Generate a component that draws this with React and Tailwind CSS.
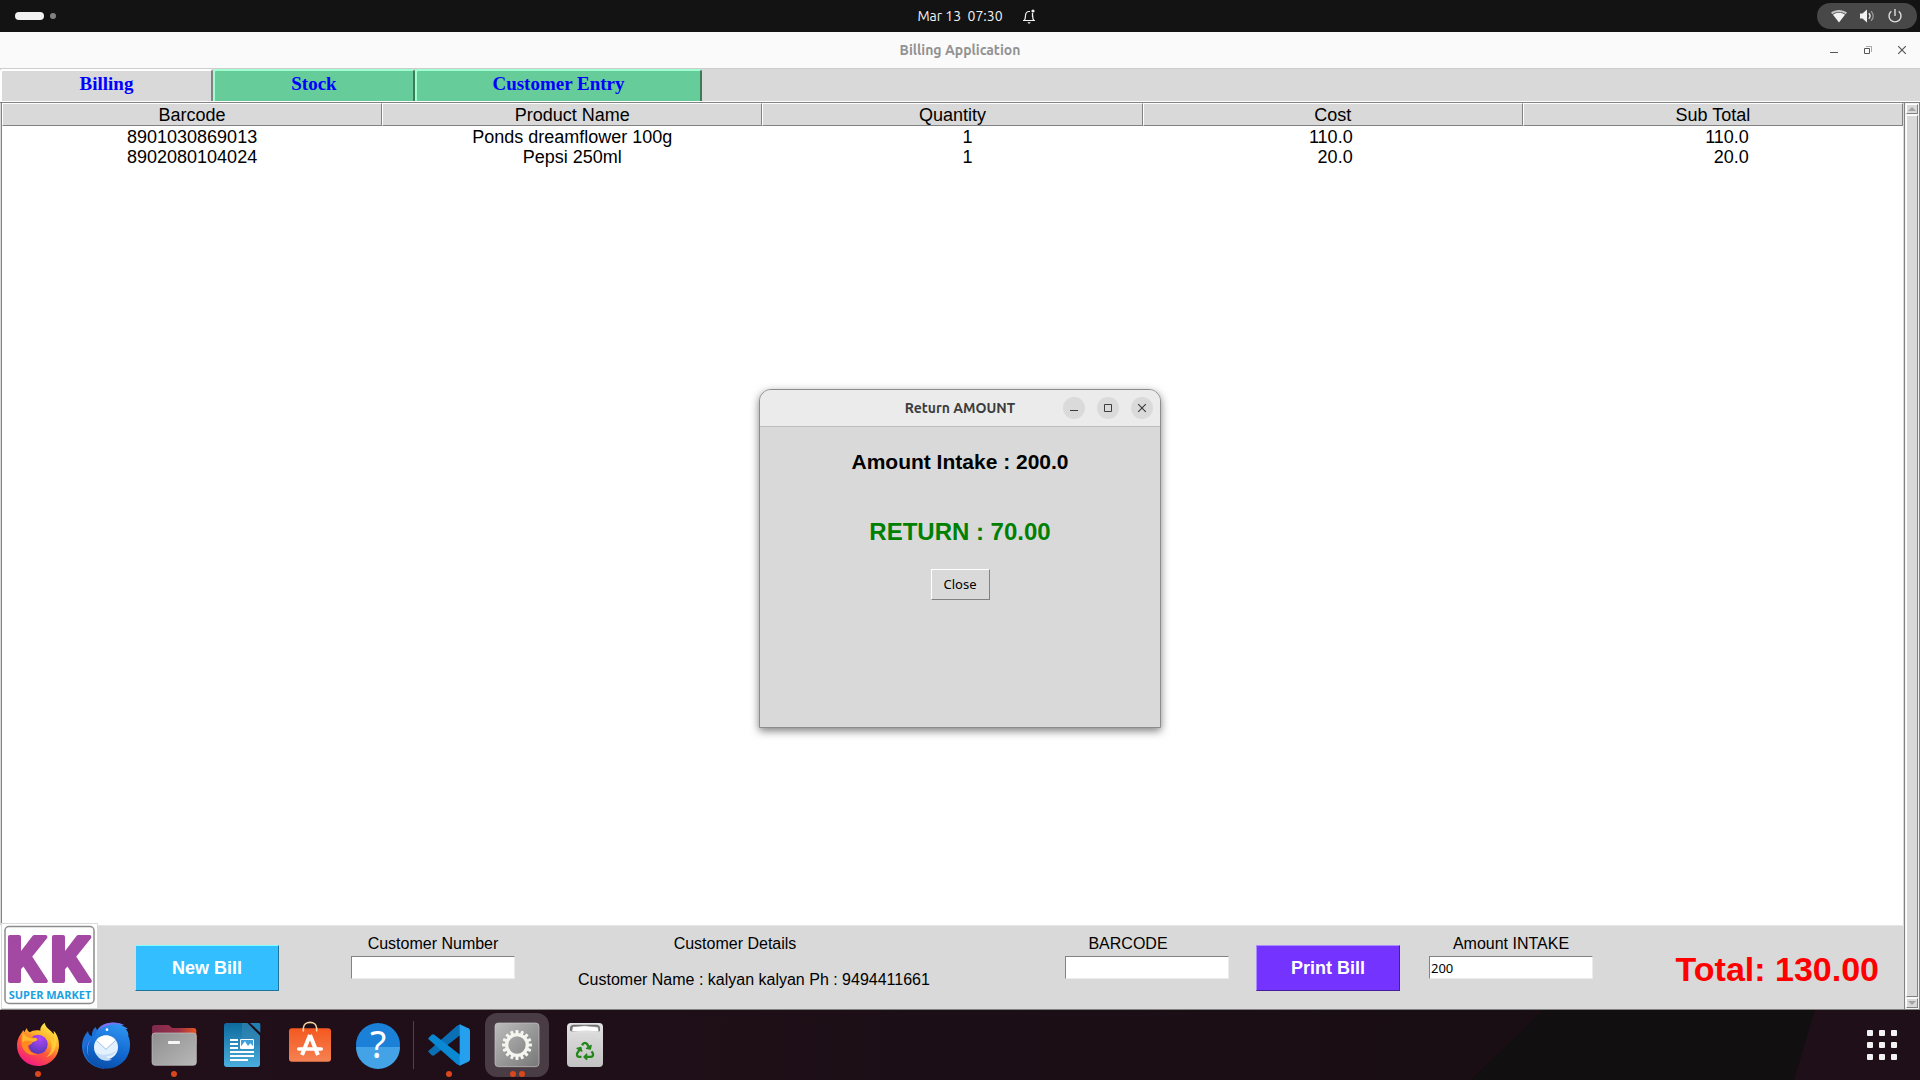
import React from "react";
import { FaRecycle } from "react-icons/fa";

const COLUMNS = ["Barcode", "Product Name", "Quantity", "Cost", "Sub Total"];
const ROWS = [
  ["8901030869013", "Ponds dreamflower 100g", "1", "110.0", "110.0"],
  ["8902080104024", "Pepsi 250ml", "1", "20.0", "20.0"],
];

const LABEL = "text-base leading-5";
const FIELD =
  "h-[23px] w-[164px] border border-t-[#828282] border-l-[#828282] border-r-[#ececec] border-b-[#ececec] bg-white px-px font-['Noto_Sans',sans-serif] text-[13px] text-black outline-none";

function TopBar() {
  return (
    <header className="grid h-8 grid-cols-[1fr_auto_1fr] items-center bg-[#131313] text-[#f2f2f2]">
      <div className="flex items-center gap-1.5 pl-[15px]">
        <span className="h-2 w-[29px] rounded-full bg-[#f2f2f2]" />
        <span className="size-1.5 rounded-full bg-[#808080]" />
      </div>
      <time className="font-['Ubuntu','Noto_Sans',sans-serif] text-sm whitespace-pre">Mar 13  07:30</time>
      <div className="flex items-center justify-between pr-[3px] pl-[18px]">
        <svg viewBox="0 0 16 16" className="size-4" fill="none" stroke="#f2f2f2" strokeWidth="1.2">
          <path d="M3.2 12.5c1.3-1.6 1.1-3 1.3-5 .2-2.600 1.200-4 3.500-4h1M11.500 6.500c.1 2.500.1 4.400 1.300 6M2 12.500h12" />
          <path d="M6.500 14.200h3.200l-.8 1.300H7.300z" fill="#f2f2f2" stroke="none" />
          <circle cx="12" cy="3" r="1.600" fill="#f2f2f2" stroke="none" />
          <path d="M11.500 5v4" />
        </svg>
        <div className="flex h-[26px] w-[100px] items-center justify-center gap-3 rounded-full bg-[#484848]">
          <svg viewBox="0 0 16 16" className="size-4" fill="#f2f2f2">
            <path d="M0 4.600C4.600 1 11.400 1 16 4.600l-1.300 1.600C10.900 3.400 5.100 3.400 1.300 6.200z" opacity=".75" />
            <path d="M2 6.700c3.700-2.600 8.300-2.600 12 0L8 14.500z" />
          </svg>
          <svg viewBox="0 0 16 16" className="size-4" fill="#f2f2f2">
            <path d="M1 5.500h2.500L8 1.500v13l-4.500-4H1z" />
            <path d="M9.800 5.200c1.500 1.600 1.500 4 0 5.600" fill="none" stroke="#f2f2f2" strokeWidth="1.300" />
            <path d="M12 3.200c3 2.700 3 6.900 0 9.600" fill="none" stroke="#9a9a9a" strokeWidth="1.300" />
          </svg>
          <svg viewBox="0 0 16 16" className="size-4" fill="none" stroke="#dedede" strokeWidth="1.400">
            <path d="M4.300 3.200a6 6 0 1 0 7.400 0M8 1v7" />
          </svg>
        </div>
      </div>
    </header>
  );
}

function WindowGlyph({ kind }) {
  return (
    <svg viewBox="0 0 12 12" className="size-3" fill="none" stroke="currentColor">
      {kind === "Minimize" && <path d="M2 8.500h8" />}
      {kind === "Restore" && (
        <>
          <path d="M2.500 4.500h5v5h-5z" />
          <path d="M4 2.500h5.500V8" opacity=".5" />
        </>
      )}
      {kind === "Maximize" && <path d="M2.500 2.500h7v7h-7z" />}
      {kind === "Close" && <path d="M2.200 2.200l7.600 7.600M9.800 2.200L2.200 9.800" strokeWidth="1.200" />}
    </svg>
  );
}

function TitleBar() {
  return (
    <div className="grid h-9 grid-cols-[1fr_auto_1fr] items-center bg-[#fafafa]">
      <span />
      <h1 className="font-['Ubuntu','Noto_Sans',sans-serif] text-sm font-bold text-[#929292]">Billing Application</h1>
      <div className="flex justify-end gap-3 pr-[7px] text-[#555555]">
        {["Minimize", "Restore", "Close"].map((k) => (
          <button key={k} type="button" aria-label={k} className="flex size-[22px] items-center justify-center">
            <WindowGlyph kind={k} />
          </button>
        ))}
      </div>
    </div>
  );
}

function Tabs() {
  const green = "h-8 border-x-2 border-t-2 border-t-[#9fffd0] border-l-[#9fffd0] border-r-[#3c7a5a] bg-[#66cc99] pb-1";
  return (
    <nav className="flex items-start border-t border-b border-t-[#cdcdcd] border-b-white bg-[#d9d9d9] font-['Liberation_Serif',serif] text-[19px] leading-[26px] font-bold text-[#0000ff]">
      <button
        type="button"
        className="h-8 w-[213px] rounded-t-[3px] border-x-2 border-t-2 border-t-white border-r-[#828282] border-l-white bg-[#d9d9d9] pb-1"
      >
        Billing
      </button>
      <button type="button" className={green + " w-[202px] rounded-t-[3px]"}>
        Stock
      </button>
      <button type="button" className={green + " w-[287px] rounded-t-[3px]"}>
        Customer Entry
      </button>
    </nav>
  );
}

function Cell({ column, value }) {
  if (column < 2) return value;
  return (
    <span className={(column === 4 ? "w-18" : "w-10") + " mx-auto flex justify-end"}>{value}</span>
  );
}

function ItemsTable() {
  return (
    <div className="mx-px flex-1 border-l border-l-[#828282] bg-white">
      <table className="w-full table-fixed border-separate border-spacing-0 text-lg leading-[18px]">
        <thead>
          <tr>
            {COLUMNS.map((c) => (
              <th
                key={c}
                className="h-[23px] border border-t-white border-r-[#828282] border-b-[#828282] border-l-white bg-[#d9d9d9] p-0 font-normal"
              >
                {c}
              </th>
            ))}
          </tr>
        </thead>
        <tbody>
          {ROWS.map((r) => (
            <tr key={r[0]}>
              {r.map((v, i) => (
                <td key={COLUMNS[i]} className="h-5 p-0 pt-0.5 text-center">
                  <Cell column={i} value={v} />
                </td>
              ))}
            </tr>
          ))}
        </tbody>
      </table>
    </div>
  );
}

function Logo() {
  return (
    <svg viewBox="0 0 97 85" className="-mt-[3px] h-[85px] w-[97px] shrink-0" role="img" aria-label="KK Super Market">
      <rect width="97" height="85" fill="#dadada" />
      <rect x="1" y="1" width="95" height="84" fill="#ffffff" />
      <rect x="4" y="3.500" width="89" height="77" rx="4" fill="none" stroke="#8c8c8c" strokeWidth="1.500" />
      <g fill="#a349a4" stroke="#a349a4" strokeWidth="4" strokeLinejoin="round" fontFamily="Roboto, sans-serif" fontWeight="700" fontSize="62">
        <text x="5" y="58">K</text>
        <text x="49" y="58">K</text>
      </g>
      <text x="49" y="76" textAnchor="middle" fill="#1ba1e2" fontFamily="'Open Sans', sans-serif" fontWeight="700" fontSize="11">
        SUPER MARKET
      </text>
    </svg>
  );
}

function BillingPanel() {
  return (
    <div className="flex h-[85px] items-start border-t border-b border-l border-t-[#e6e6e6] border-b-[#828282] border-l-white bg-[#d9d9d9]">
      <Logo />
      <button
        type="button"
        className="mt-[19px] ml-[37px] h-[46px] w-36 border border-t-[#7fffff] border-r-[#1f7299] border-b-[#1f7299] border-l-[#7fffff] bg-[#33bfff] text-lg font-bold text-white"
      >
        New Bill
      </button>
      <div className="mt-2 ml-[72px] flex flex-col items-center gap-0.5">
        <label htmlFor="customer-number" className={LABEL}>
          Customer Number
        </label>
        <input id="customer-number" type="text" className={FIELD} />
      </div>
      <div className="mt-2 ml-[63px] flex w-[352px] flex-col gap-4">
        <p className={LABEL + " pr-[38px] text-center"}>Customer Details</p>
        <p className={LABEL + " whitespace-nowrap"}>Customer Name : kalyan kalyan Ph : 9494411661</p>
      </div>
      <div className="mt-2 ml-[135px] flex flex-col items-center gap-0.5">
        <label htmlFor="barcode" className={LABEL + " pr-[38px]"}>
          BARCODE
        </label>
        <input id="barcode" type="text" className={FIELD} />
      </div>
      <button
        type="button"
        className="mt-[19px] ml-[27px] h-[46px] w-36 border border-t-[#a98cff] border-r-[#451f99] border-b-[#451f99] border-l-[#a98cff] bg-[#7433ff] text-lg font-bold text-white"
      >
        Print Bill
      </button>
      <div className="mt-2 ml-[29px] flex flex-col items-center gap-0.5">
        <label htmlFor="amount-intake" className={LABEL}>
          Amount INTAKE
        </label>
        <input id="amount-intake" type="text" defaultValue="200" className={FIELD} />
      </div>
      <output className="mt-[25px] mr-[25px] ml-auto text-[34px] leading-9 font-bold whitespace-nowrap text-[#ff0000]">
        Total: 130.00
      </output>
    </div>
  );
}

function Scrollbar() {
  const bevel = "border border-t-white border-l-white border-r-[#828282] border-b-[#828282] bg-[#d9d9d9]";
  return (
    <div className="flex w-4 flex-col gap-px border border-[#828282] bg-[#f4f4f4] p-px">
      <button type="button" aria-label="Scroll up" className={bevel + " flex h-2.5 w-3 items-center justify-center"}>
        <svg viewBox="0 0 8 4" className="h-1 w-2" fill="#a3a3a3">
          <path d="M4 0l4 4H0z" />
        </svg>
      </button>
      <div className={bevel + " w-3 flex-1"} />
      <button type="button" aria-label="Scroll down" className={bevel + " flex h-2.5 w-3 items-center justify-center"}>
        <svg viewBox="0 0 8 4" className="h-1 w-2" fill="#a3a3a3">
          <path d="M0 0h8L4 4z" />
        </svg>
      </button>
    </div>
  );
}

function ReturnDialog() {
  return (
    <section
      role="dialog"
      aria-labelledby="return-title"
      className="absolute top-[389px] left-1/2 h-[339px] w-[402px] -translate-x-1/2 overflow-hidden rounded-t-xl border border-[#8c8c8c] bg-[#d9d9d9] shadow-[0_3px_8px_rgba(0,0,0,0.5)]"
    >
      <div className="grid h-[37px] grid-cols-[1fr_auto_1fr] items-center border-b border-[#bdbdbd] bg-[#ebebeb]">
        <span />
        <h2 id="return-title" className="font-['Ubuntu','Noto_Sans',sans-serif] text-sm font-bold text-[#3d3d3d]">
          Return AMOUNT
        </h2>
        <div className="flex justify-end gap-3 pr-[7px] text-[#3d3d3d]">
          {["Minimize", "Maximize", "Close"].map((k) => (
            <button
              key={k}
              type="button"
              aria-label={k}
              className="flex size-[22px] items-center justify-center rounded-full bg-[#dadada]"
            >
              <WindowGlyph kind={k} />
            </button>
          ))}
        </div>
      </div>
      <div className="flex flex-col items-center pt-[23px] font-bold">
        <p className="text-[21px] leading-6 text-black">Amount Intake : 200.0</p>
        <p className="mt-11 text-2xl leading-7 text-[#008000]">RETURN : 70.00</p>
        <button
          type="button"
          className="mt-[23px] h-[31px] w-[59px] border border-t-white border-r-[#828282] border-b-[#828282] border-l-white bg-[#d9d9d9] font-['Noto_Sans',sans-serif] text-[13px] font-normal text-black"
        >
          Close
        </button>
      </div>
    </section>
  );
}

function Firefox() {
  return (
    <svg viewBox="0 0 144 144" className="size-12">
      <defs>
        <linearGradient id="ffx" x1=".8" y1="0" x2=".25" y2="1">
          <stop offset="0" stopColor="#fff44f" />
          <stop offset=".35" stopColor="#ffb02a" />
          <stop offset=".6" stopColor="#ff5a36" />
          <stop offset="1" stopColor="#f0148c" />
        </linearGradient>
        <radialGradient id="ffg" cx=".6" cy=".2" r=".9">
          <stop offset="0" stopColor="#b247fb" />
          <stop offset="1" stopColor="#4d36b0" />
        </radialGradient>
      </defs>
      <path
        d="M92 5c-10 8-14 16-13 24-14-3-24 0-32 5-6-3-8-9-8-12-4 3-7 8-7 12-2-2-3-4-3-6C18 40 9 56 9 73c0 35 28 62 63 62s63-27 63-63c0-18-6-33-16-43 1 4 1 8 0 11C112 27 94 21 92 5z"
        fill="url(#ffx)"
      />
      <path d="M119 29c12 22 11 50-3 66-5 8-12 12-20 14 18-14 22-38 12-58 5 3 9 7 12 12 1-10 1-22-1-34z" fill="#ffd83a" opacity=".7" />
      <circle cx="72" cy="70" r="29" fill="url(#ffg)" />
      <path d="M27 28c6 18 16 20 34 22 2 0 9 1 9 4 0 5-8 8-14 9-1 6-8 9-15 11 2 15 14 25 31 25-26 10-50-10-50-37 0-13 3-24 5-34z" fill="#ff8a1e" />
      <path d="M27 32c6 14 18 20 34 20 2 0 9 0 9 3 0 4-8 7-14 7-9-3-20-4-31 2-1-10 0-22 2-32z" fill="#ffb52e" />
    </svg>
  );
}

function Thunderbird() {
  return (
    <svg viewBox="0 0 144 144" className="size-12">
      <defs>
        <linearGradient id="tb" x1=".7" y1="0" x2=".4" y2="1">
          <stop offset="0" stopColor="#2f96f2" />
          <stop offset=".6" stopColor="#1268d0" />
          <stop offset="1" stopColor="#0a4fa8" />
        </linearGradient>
      </defs>
      <path d="M40 18c-9 8-11 20-10 28-7-2-11-8-12-16C7 42 0 58 0 74c0 38 28 66 66 69l20-50z" fill="#1b6fd6" />
      <path
        d="M40 42C46 18 62 6 88 5c16-1 28 2 38 7l-8 2c8 1 15 5 20 10l-7 1c7 6 9 13 8 21 4 9 5 17 5 26 0 42-32 71-72 71-40 0-63-28-66-58 6-18 18-34 34-43z"
        fill="url(#tb)"
      />
      <path d="M49 29C58 11 74 5 92 5c12 0 24 2 34 7-26-5-54-4-77 17z" fill="#8a6cf0" />
      <path d="M28 54c-10 12-14 30-8 52-8-18-6-40 8-52z" fill="#a58bff" />
      <circle cx="72" cy="79" r="36" fill="#e3f0fd" />
      <path d="M43 58l29 27 29-27c-14-19-44-19-58 0z" fill="#ffffff" />
      <path d="M43 58l29 27 29-27" fill="none" stroke="#9dc0e6" strokeWidth="3" />
      <path d="M40 94c8 22 28 30 50 22-10-2-16-6-18-12 14 4 28-4 35-22-8 18-49 26-67 12z" fill="#c3dcf7" />
      <circle cx="75" cy="26" r="4" fill="#ffffff" />
    </svg>
  );
}

function Files() {
  return (
    <svg viewBox="0 0 144 144" className="size-12">
      <defs>
        <linearGradient id="fb">
          <stop offset="0" stopColor="#7d2a4d" />
          <stop offset=".6" stopColor="#9c3148" />
          <stop offset="1" stopColor="#e95420" />
        </linearGradient>
        <linearGradient id="ff" x2="1" y2="1">
          <stop offset="0" stopColor="#8f8f8f" />
          <stop offset="1" stopColor="#b8b8b8" />
        </linearGradient>
      </defs>
      <path d="M6 20c0-5 3-8 8-8h40c7 0 8 9 15 9h62c5 0 8 3 8 8v40H6z" fill="url(#fb)" />
      <rect x="6" y="36" width="133" height="97" rx="9" fill="url(#ff)" stroke="#c4c4c4" strokeWidth="2" />
      <rect x="54" y="60" width="36" height="9" rx="3" fill="#f6f6f6" />
    </svg>
  );
}

function Writer() {
  return (
    <svg viewBox="0 0 144 144" className="size-12">
      <defs>
        <linearGradient id="wr" x2="0" y2="1">
          <stop offset="0" stopColor="#0e6a9c" />
          <stop offset="1" stopColor="#4aaede" />
        </linearGradient>
      </defs>
      <path d="M18 14c0-5 3-8 8-8h62l38 38v86c0 5-3 8-8 8H26c-5 0-8-3-8-8z" fill="url(#wr)" />
      <path d="M72 6h16l38 38v28H72z" fill="#3787b4" opacity=".6" />
      <path d="M96 6h26c3 0 5 2 5 5v24z" fill="#2080b5" />
      <g fill="#ffffff">
        <path d="M36 54h24v6H36zM36 66h24v6H36zM36 78h24v6H36zM36 90h72v6H36zM36 102h72v6H36zM36 114h54v6H36z" />
        <rect x="66" y="54" width="42" height="30" rx="4" />
      </g>
      <path d="M69 57h36v18l-8-8-7 8-9-14-12 15z" fill="#3fa0dc" />
    </svg>
  );
}

function Software() {
  return (
    <svg viewBox="0 0 144 144" className="size-12">
      <defs>
        <linearGradient id="sw" x2="0" y2="1">
          <stop offset="0" stopColor="#f4581f" />
          <stop offset="1" stopColor="#f58253" />
        </linearGradient>
      </defs>
      <rect x="9" y="22" width="126" height="100" rx="9" fill="url(#sw)" />
      <path d="M52 30V22c0-24 40-24 40 0v8" fill="none" stroke="#f3d3a0" strokeWidth="5" strokeLinecap="round" />
      <path d="M72 42L48 102M72 42l24 60" fill="none" stroke="#ffffff" strokeWidth="12" strokeLinejoin="round" />
      <path d="M38 84h68" fill="none" stroke="#ffffff" strokeWidth="10" strokeLinecap="round" />
    </svg>
  );
}

function Help() {
  return (
    <svg viewBox="0 0 144 144" className="size-12 overflow-visible">
      <circle cx="72" cy="72" r="66" fill="#1b80d8" />
      <path d="M6 78a66 66 0 0 0 132 0z" fill="#43a3e6" />
      <text x="72" y="112" textAnchor="middle" fill="#ffffff" fontFamily="'Noto Sans', sans-serif" fontSize="112">
        ?
      </text>
    </svg>
  );
}

function Code() {
  return (
    <svg viewBox="0 0 144 144" className="size-12">
      <path d="M10 92l10 11c3 2 5 2 8 0L106 42V10L96 14 10 90z" fill="#0b6fb5" />
      <path d="M10 52l10-11c3-2 5-2 8 0l78 61v32l-10-4L10 54z" fill="#0b88d3" />
      <path d="M104 10l26 12c3 1 5 4 5 8v84c0 4-2 7-5 8l-26 12z" fill="#25a0ef" />
    </svg>
  );
}

function Settings() {
  const teeth = Array.from({ length: 16 }, (_, i) => i * 22.5);
  return (
    <svg viewBox="0 0 144 144" className="size-12">
      <defs>
        <linearGradient id="st" x2="1" y2="1">
          <stop offset="0" stopColor="#bcbcbc" />
          <stop offset="1" stopColor="#777777" />
        </linearGradient>
      </defs>
      <rect x="6" y="6" width="132" height="131" rx="10" fill="url(#st)" stroke="#c9c9c9" strokeWidth="2" />
      <g fill="#f5f5f0">
        {teeth.map((a) => (
          <rect key={a} x="67.500" y="27" width="9" height="12" rx="2" transform={`rotate(${a} 72 72)`} />
        ))}
      </g>
      <circle cx="72" cy="72" r="31" fill="none" stroke="#f5f5f0" strokeWidth="10" />
    </svg>
  );
}

function Trash() {
  return (
    <svg viewBox="0 0 144 144" className="size-12">
      <defs>
        <linearGradient id="tr" x2="0" y2="1">
          <stop offset="0" stopColor="#e2e2e2" />
          <stop offset="1" stopColor="#c2c2c2" />
        </linearGradient>
      </defs>
      <rect x="18" y="6" width="108" height="132" rx="12" fill="url(#tr)" />
      <path d="M27 30V22c0-7 4-11 11-11h68c7 0 11 4 11 11v8z" fill="#707070" />
      <path d="M32 32l3-15 36-3 40 4 3 15z" fill="#ffffff" stroke="#8a8a8a" strokeWidth="2" />
      <path d="M33 33c26-6 52-6 80 0v3H33z" fill="#dedede" />
      <FaRecycle x="44" y="62" size={56} color="#23861b" />
    </svg>
  );
}

const DOCK = [
  { name: "Firefox", Icon: Firefox, dots: 1 },
  { name: "Thunderbird", Icon: Thunderbird, dots: 0 },
  { name: "Files", Icon: Files, dots: 1 },
  { name: "Writer", Icon: Writer, dots: 0 },
  { name: "App Center", Icon: Software, dots: 0 },
  { name: "Help", Icon: Help, dots: 0 },
  { name: "Code", Icon: Code, dots: 1 },
  { name: "Settings", Icon: Settings, dots: 2, active: true },
  { name: "Trash", Icon: Trash, dots: 0 },
];

function Dock() {
  return (
    <footer className="relative flex h-[70px] items-center bg-linear-to-r from-[#220f1a] to-[#190e14] to-80% pl-1.5">
      <svg viewBox="0 0 460 70" className="absolute top-0 right-0 h-full w-[460px]" aria-hidden="true">
        <path d="M83 0h272l-21 70H11z" fill="#120f10" />
        <path d="M355 0h105v70H334z" fill="#1f0f19" />
      </svg>
      <div className="flex gap-1">
        {DOCK.map(({ name, Icon, dots, active }) => (
          <React.Fragment key={name}>
            {name === "Code" && <span className="-mx-px h-12 w-px self-center bg-[#4d434a]" />}
            <button
              type="button"
              aria-label={name}
              className={(active ? "bg-[#4a3c44]" : "") + " relative flex size-16 items-center justify-center rounded-xl"}
            >
              <Icon />
              {dots > 0 && (
                <span className="absolute inset-x-0 bottom-0 flex justify-center gap-[3px]">
                  <span className="size-1.5 rounded-full bg-[#d9481c]" />
                  {dots > 1 && <span className="size-1.5 rounded-full bg-[#d9481c]" />}
                </span>
              )}
            </button>
          </React.Fragment>
        ))}
      </div>
      <button type="button" aria-label="Show Apps" className="relative mr-[23px] ml-auto grid grid-cols-3 gap-1.5">
        {Array.from({ length: 9 }, (_, i) => (
          <span key={i} className="size-1.5 rounded-[1px] bg-[#f2f2f2]" />
        ))}
      </button>
    </footer>
  );
}

export default function App() {
  return (
    <div className="relative flex min-h-screen flex-col bg-[#d9d9d9] font-['Liberation_Sans',Arial,sans-serif] text-black">
      <TopBar />
      <TitleBar />
      <Tabs />
      <main className="flex flex-1">
        <div className="flex min-w-0 flex-1 flex-col border-t border-t-[#828282]">
          <ItemsTable />
          <BillingPanel />
        </div>
        <Scrollbar />
      </main>
      <Dock />
      <ReturnDialog />
    </div>
  );
}
